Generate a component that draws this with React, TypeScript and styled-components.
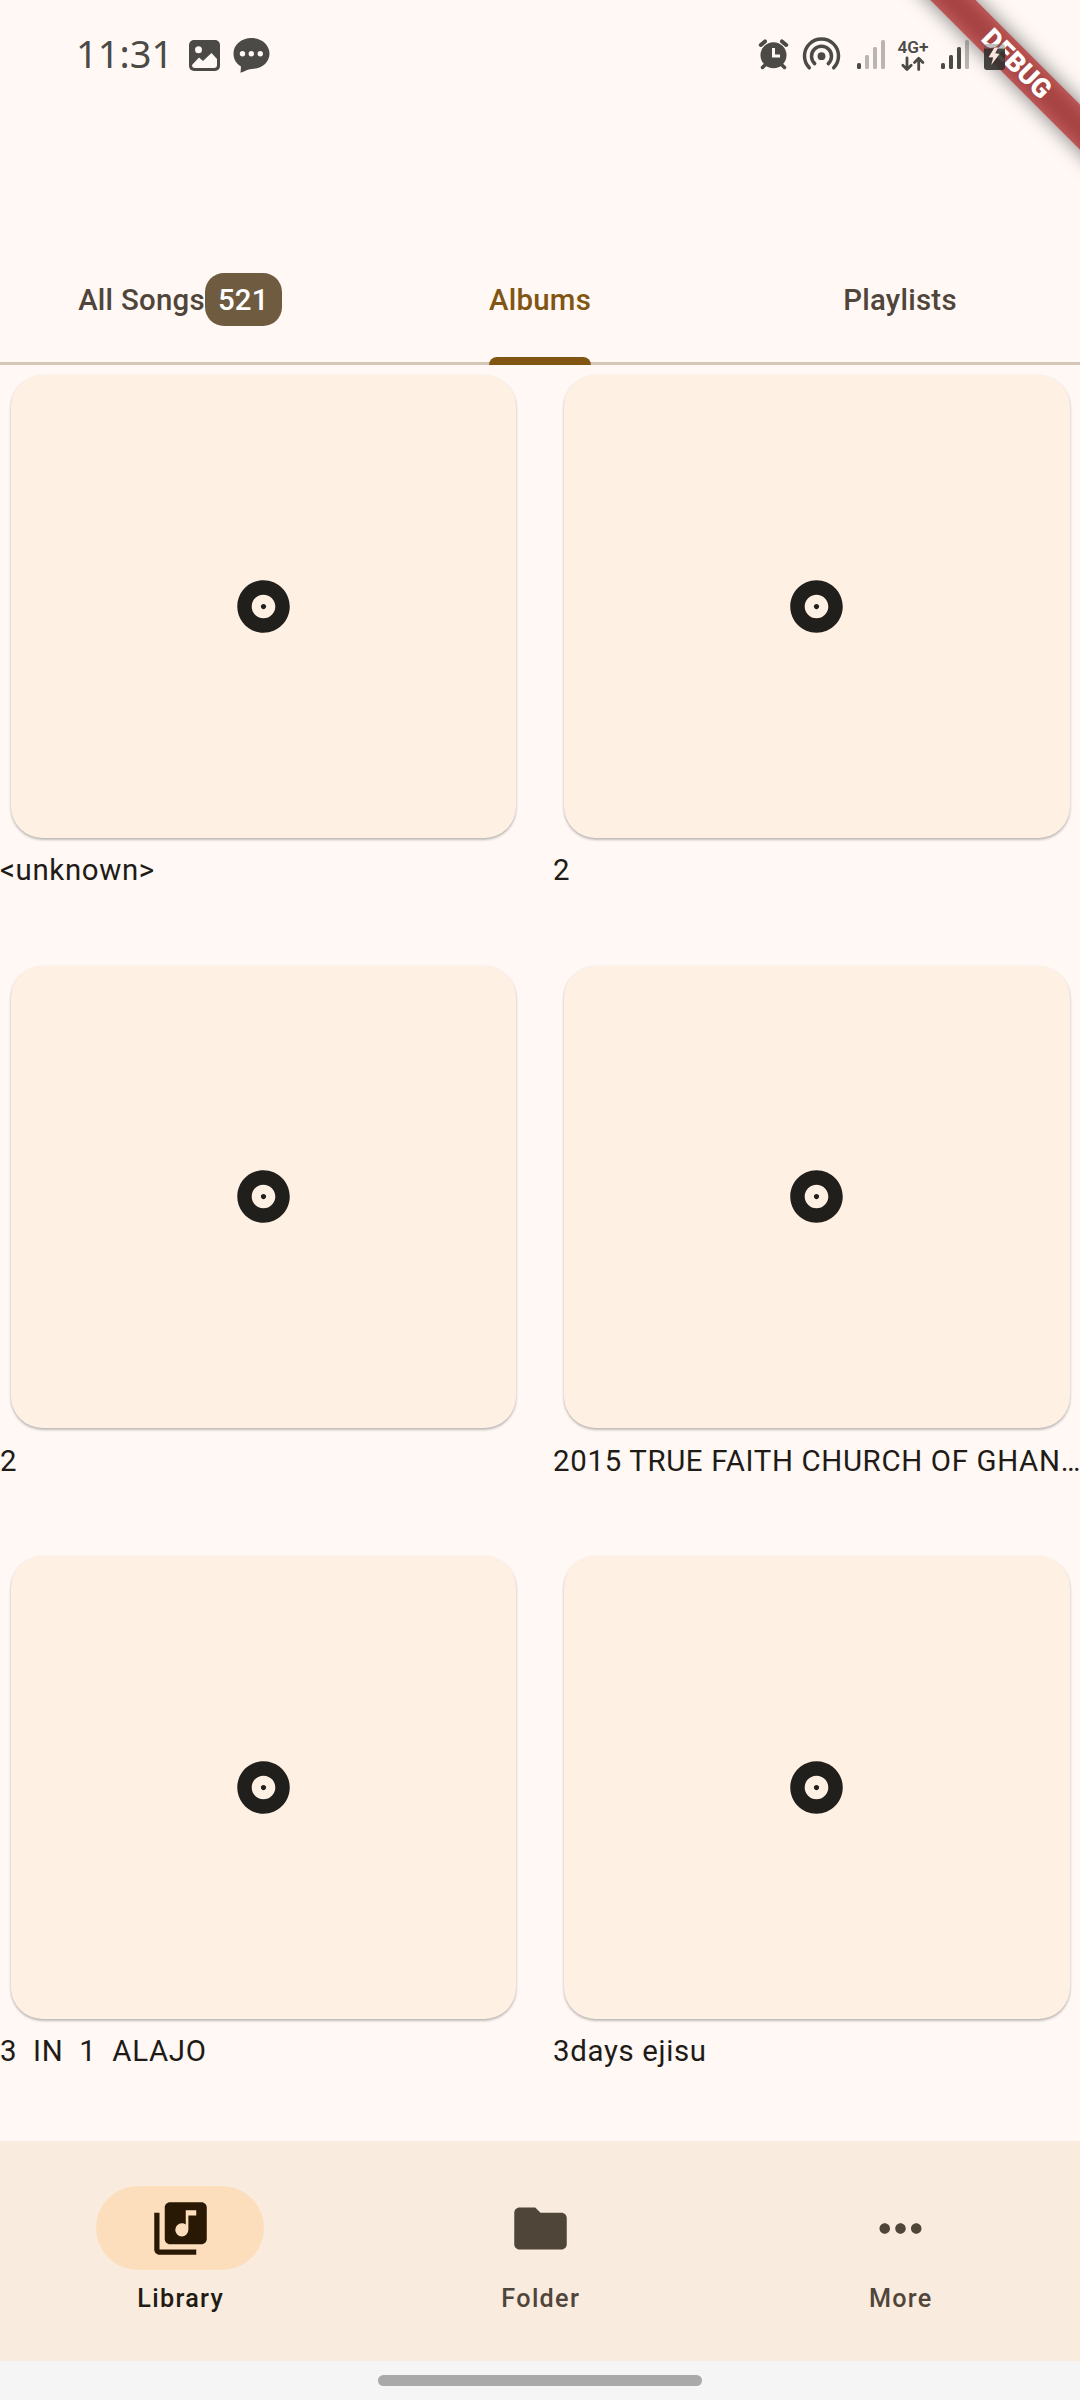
import React from "react";
import styled, { createGlobalStyle } from "styled-components";
import { MdAlbum, MdFolder, MdLibraryMusic, MdMoreHoriz } from "react-icons/md";

const GlobalStyle = createGlobalStyle`
  *, *::before, *::after { box-sizing: border-box; }
  html, body { margin: 0; padding: 0; background: #fff8f5; }
  body { font-family: Roboto, "Noto Sans", sans-serif; }
  svg { display: block; }
`;

const Screen = styled.div`
  position: relative;
  display: flex;
  flex-direction: column;
  width: 1080px;
  height: 2400px;
  overflow: hidden;
  background: #fff8f5;
  color: #201b16;
`;

const StatusBar = styled.header`
  display: flex;
  align-items: center;
  justify-content: space-between;
  height: 110px;
  flex: none;
  padding: 0 74px 0 76px;
  color: #4b4a47;
`;

const StatusGroup = styled.div`
  position: relative;
  z-index: 2;
  display: flex;
  align-items: center;
`;

const Clock = styled.time`
  width: 112px;
  padding-bottom: 4px;
  font-family: "Noto Sans", sans-serif;
  font-size: 38px;
  line-height: 44px;
  white-space: nowrap;
`;

const Tabs = styled.nav`
  display: grid;
  grid-template-columns: repeat(3, 1fr);
  flex: none;
  height: 129px;
  margin-top: 126px;
  border-bottom: 3px solid #d6c7b6;
`;

const Tab = styled.button`
  display: flex;
  align-items: center;
  justify-content: center;
  height: 126px;
  padding: 0;
  border: 0;
  background: none;
  font: 500 29.4px/42px Roboto, sans-serif;
  letter-spacing: 0.26px;
`;

const TabLabel = styled.span<{ $active?: boolean }>`
  position: relative;
  display: flex;
  align-items: center;
  height: 100%;
  padding-top: 2px;
  color: ${(p) => (p.$active ? "#815512" : "#50453a")};
  &::after {
    content: "";
    display: ${(p) => (p.$active ? "block" : "none")};
    position: absolute;
    left: 0;
    right: 0;
    bottom: -3px;
    height: 8px;
    border-radius: 8px 8px 0 0;
    background: #815512;
  }
`;

const CountBadge = styled.span`
  display: flex;
  align-items: center;
  justify-content: center;
  width: 77px;
  height: 53px;
  padding-top: 2px;
  border-radius: 19px;
  background: #6f5b40;
  color: #fff;
`;

const AlbumGrid = styled.main`
  display: grid;
  grid-template-columns: repeat(2, minmax(0, 1fr));
  grid-auto-rows: 564.4px;
  gap: 26.2px;
  flex: 1;
  min-height: 0;
  overflow: hidden;
`;

const AlbumCell = styled.article`
  display: flex;
  flex-direction: column;
  min-width: 0;
`;

const AlbumCard = styled.div`
  display: flex;
  align-items: center;
  justify-content: center;
  flex: none;
  height: 462.5px;
  margin: 10px 10.5px 11.5px;
  border-radius: 31.5px;
  background: #fff0e4;
  color: #201f1c;
  box-shadow: 0 2px 2.6px rgba(0, 0, 0, 0.2), 0 1px 3px rgba(0, 0, 0, 0.1);
`;

const AlbumTitle = styled.p`
  margin: 0 -4px 0 0;
  font-size: 29.4px;
  line-height: 42px;
  letter-spacing: 0.66px;
  white-space: pre;
  overflow: hidden;
  text-overflow: ellipsis;
`;

const BottomNav = styled.nav`
  display: grid;
  grid-template-columns: repeat(3, 1fr);
  flex: none;
  height: 220px;
  background: #f9ebde;
`;

const NavItem = styled.button<{ $active?: boolean }>`
  display: flex;
  flex-direction: column;
  align-items: center;
  gap: 11px;
  padding: 45px 0 0;
  border: 0;
  background: none;
  font: 500 25.2px/36px Roboto, sans-serif;
  letter-spacing: 1.31px;
  color: ${(p) => (p.$active ? "#201b13" : "#50453a")};
`;

const NavLabel = styled.span`
  padding-left: 1.5px;
`;

const NavPill = styled.span<{ $active?: boolean }>`
  display: flex;
  align-items: center;
  justify-content: center;
  width: 168px;
  height: 84px;
  border-radius: 42px;
  background: ${(p) => (p.$active ? "#fcdebc" : "transparent")};
  color: ${(p) => (p.$active ? "#281804" : "#4f4538")};
`;

const GestureBar = styled.footer`
  display: flex;
  justify-content: center;
  flex: none;
  height: 39px;
  padding-top: 14px;
  background: #f5f5f5;
`;

const Handle = styled.span`
  width: 324px;
  height: 11px;
  border-radius: 6px;
  background: #a9a9a9;
`;

const RibbonCorner = styled.div`
  position: absolute;
  z-index: 1;
  top: 0;
  right: 0;
  width: 210px;
  height: 210px;
  overflow: hidden;
  pointer-events: none;
`;

const Ribbon = styled.div`
  position: absolute;
  left: 60px;
  top: 73.5px;
  width: 300px;
  height: 31.5px;
  transform-origin: 150px -73.5px;
  transform: rotate(45deg);
  color: #fff;
  font-size: 26.8px;
  font-weight: 900;
  line-height: 32px;
  text-align: center;
  &::before,
  &::after {
    content: "";
    position: absolute;
    inset: 0;
    z-index: -1;
  }
  &::before {
    background: rgba(0, 0, 0, 0.5);
    filter: blur(10px);
  }
  &::after {
    background: rgba(183, 28, 28, 0.63);
  }
`;

const statusIcons = (
  <svg width="250" height="40" viewBox="756 35 250 40" fill="currentColor">
    <circle cx="773.5" cy="55.2" r="13" />
    <path d="M773.5 48v8h6.5" fill="none" stroke="#fff8f5" strokeWidth="3" />
    <path d="M760.8 45l4.2-3.600M786.200 45l-4.200-3.600" fill="none" stroke="currentColor" strokeWidth="4" strokeLinecap="round" />
    <path d="M765.500 64.500l-3 3M781.500 64.500l3 3" fill="none" stroke="currentColor" strokeWidth="3.500" strokeLinecap="round" />
    <g fill="none" stroke="currentColor" strokeWidth="3.500" strokeLinecap="round">
      <path d="M809.300 67.800a17 17 0 1 1 24.400 0" />
      <path d="M814.700 63.600a10 10 0 1 1 13.600 0" />
    </g>
    <circle cx="821.500" cy="56.200" r="3.900" />
    <rect x="857" y="63" width="4" height="6" rx="1.500" />
    <g opacity="0.38">
      <rect x="865" y="55" width="4" height="14" rx="1.500" />
      <rect x="873" y="47" width="4" height="22" rx="1.500" />
      <rect x="881" y="40" width="4" height="29" rx="1.500" />
    </g>
    <text x="897.5" y="53" fontFamily="Roboto, sans-serif" fontSize="17" fontWeight="600" textLength="31" lengthAdjust="spacingAndGlyphs">4G+</text>
    <path d="M907 58v11M902.800 65.300l4.200 4.200 4.200-4.200M918.700 69.500V58.500M914.500 62.500l4.200-4.200 4.200 4.200" fill="none" stroke="currentColor" strokeWidth="2.800" strokeLinecap="round" strokeLinejoin="round" />
    <rect x="941" y="63" width="4" height="6" rx="1.500" />
    <rect x="949" y="55" width="4" height="14" rx="1.500" />
    <rect x="957" y="47" width="4" height="22" rx="1.500" />
    <rect x="965" y="40" width="4" height="29" rx="1.500" opacity="0.38" />
    <path d="M984 48.500V47a3 3 0 0 1 3-3h15a3 3 0 0 1 3 3v1.500z" fill="#4b4a47" opacity="0.35" />
    <path d="M984 48.500h21V67a3 3 0 0 1-3 3h-15a3 3 0 0 1-3-3z" fill="#2f2f2c" opacity="0.88" />
    <path d="M994.500 47.500l-6 9.700 4.700.3-2 7.500 8.300-11-4.300-.700 3-5.800z" fill="#fbe3e0" />
  </svg>
);

const notificationIcons = (
  <svg width="84" height="38" viewBox="188 36 84 38" fill="currentColor">
    <rect x="189" y="40" width="31" height="31" rx="5" />
    <circle cx="198.500" cy="49.800" r="3.500" fill="#fff8f5" />
    <path d="M192 65l7-7.500 4 3.500 8.500-8 5.500 6v6q0 3-3 3h-19q-3 0-3-3z" fill="#fff8f5" />
    <path d="M251.500 38c10 0 18 6.500 18 15.500s-8 15.500-18 15.500c-4 0-7 2.800-11 3.800l.500-6.300c-5-3-7.500-7.500-7.500-13C233.500 44.500 241.500 38 251.500 38z" />
    <g fill="#fff8f5">
      <circle cx="242.500" cy="53.700" r="2.700" />
      <circle cx="251.300" cy="53.700" r="2.700" />
      <circle cx="260.300" cy="53.700" r="2.700" />
    </g>
  </svg>
);

const albums = ["<unknown>", "2", "2", "2015 TRUE FAITH CHURCH OF GHANA MUSIC", "3  IN  1  ALAJO", "3days ejisu"];

const destinations = [
  { label: "Library", Icon: MdLibraryMusic },
  { label: "Folder", Icon: MdFolder },
  { label: "More", Icon: MdMoreHoriz },
];

export default function App() {
  return (
    <Screen>
      <GlobalStyle />
      <StatusBar>
        <StatusGroup>
          <Clock>11:31</Clock>
          {notificationIcons}
        </StatusGroup>
        <StatusGroup>{statusIcons}</StatusGroup>
      </StatusBar>
      <Tabs>
        <Tab>
          <TabLabel>All Songs</TabLabel>
          <CountBadge>521</CountBadge>
        </Tab>
        <Tab>
          <TabLabel $active>Albums</TabLabel>
        </Tab>
        <Tab>
          <TabLabel>Playlists</TabLabel>
        </Tab>
      </Tabs>
      <AlbumGrid>
        {albums.map((title, i) => (
          <AlbumCell key={i}>
            <AlbumCard>
              <MdAlbum size={63} />
            </AlbumCard>
            <AlbumTitle>{title}</AlbumTitle>
          </AlbumCell>
        ))}
      </AlbumGrid>
      <BottomNav>
        {destinations.map(({ label, Icon }, i) => (
          <NavItem key={label} $active={i === 0}>
            <NavPill $active={i === 0}>
              <Icon size={63} />
            </NavPill>
            <NavLabel>{label}</NavLabel>
          </NavItem>
        ))}
      </BottomNav>
      <GestureBar>
        <Handle />
      </GestureBar>
      <RibbonCorner>
        <Ribbon>DEBUG</Ribbon>
      </RibbonCorner>
    </Screen>
  );
}
